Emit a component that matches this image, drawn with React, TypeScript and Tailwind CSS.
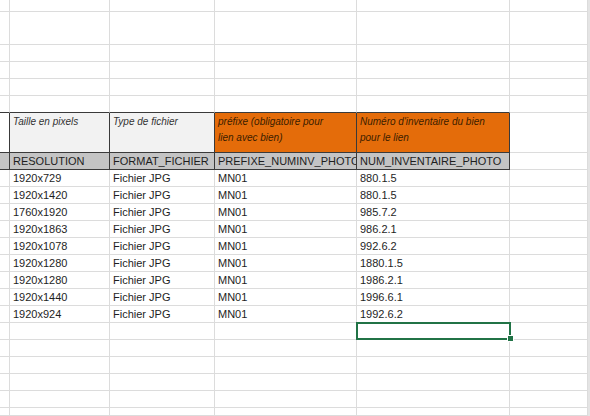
import React from 'react';

const COLS = ['w-[10px]', 'w-[100px]', 'w-[105px]', 'w-[142px]', 'w-[153px]', 'w-[78px]'];
const GRID = 'border-r border-b border-[#dcdcdc]';
const DARK = 'border-r border-b border-[#3a3a3a]';
const TXT = 'flex items-end px-[3px] pb-[1px] leading-[14px] whitespace-nowrap overflow-hidden';

const rows = [
  ['1920x729', '880.1.5'],
  ['1920x1420', '880.1.5'],
  ['1760x1920', '985.7.2'],
  ['1920x1863', '986.2.1'],
  ['1920x1078', '992.6.2'],
  ['1920x1280', '1880.1.5'],
  ['1920x1280', '1986.2.1'],
  ['1920x1440', '1996.6.1'],
  ['1920x924', '1992.6.2'],
];

function Edge() {
  return <div className="w-[2px] shrink-0 bg-[#e4e4e4]" />;
}

function EmptyRow({ h }: { h: string }) {
  return (
    <div className={`flex ${h}`}>
      {COLS.map((w, i) => (
        <div key={i} className={`${w} shrink-0 ${GRID}`} />
      ))}
      <Edge />
    </div>
  );
}

export default function App() {
  return (
    <div className="w-[590px] h-[416px] overflow-hidden bg-white text-[11px] text-[#1e1e1e] font-['Liberation_Sans',Arial,sans-serif]">
      <EmptyRow h="h-[12px]" />
      <EmptyRow h="h-[33px]" />
      <EmptyRow h="h-[17px]" />
      <EmptyRow h="h-[17px]" />
      <EmptyRow h="h-[17px]" />

      {/* row above the table: dark bottom edge */}
      <div className="flex h-[17px]">
        {COLS.slice(0, 5).map((w, i) => (
          <div key={i} className={`${w} shrink-0 border-r border-b border-r-[#dcdcdc] border-b-[#3a3a3a]`} />
        ))}
        <div className={`${COLS[5]} shrink-0 ${GRID}`} />
        <Edge />
      </div>

      {/* Header labels */}
      <div className="flex h-[40px] text-[10px] italic leading-[16px]">
        <div className={`${COLS[0]} shrink-0 ${DARK}`} />
        <div className={`${COLS[1]} shrink-0 ${DARK} bg-[#f2f2f2] text-[#333] px-[3px] pt-px whitespace-nowrap overflow-hidden`}>
          Taille en pixels
        </div>
        <div className={`${COLS[2]} shrink-0 ${DARK} bg-[#f2f2f2] text-[#333] px-[3px] pt-px whitespace-nowrap overflow-hidden`}>
          Type de fichier
        </div>
        <div className={`${COLS[3]} shrink-0 ${DARK} bg-[#e46c0a] text-[#3b1d00] px-[3px] pt-px whitespace-nowrap overflow-hidden`}>
          préfixe (obligatoire pour
          <br />
          lien avec bien)
        </div>
        <div className={`${COLS[4]} shrink-0 ${DARK} bg-[#e46c0a] text-[#3b1d00] px-[3px] pt-px whitespace-nowrap overflow-hidden`}>
          Numéro d'inventaire du bien
          <br />
          pour le lien
        </div>
        <div className={`${COLS[5]} shrink-0 ${GRID}`} />
        <Edge />
      </div>

      {/* Field names */}
      <div className="flex h-[17px]">
        <div className={`${COLS[0]} shrink-0 ${DARK} bg-[#c4c4c4]`} />
        <div className={`${COLS[1]} shrink-0 ${DARK} bg-[#c4c4c4] ${TXT}`}>RESOLUTION</div>
        <div className={`${COLS[2]} shrink-0 ${DARK} bg-[#c4c4c4] ${TXT}`}>FORMAT_FICHIER</div>
        <div className={`${COLS[3]} shrink-0 ${DARK} bg-[#c4c4c4] ${TXT}`}>PREFIXE_NUMINV_PHOTO</div>
        <div className={`${COLS[4]} shrink-0 ${DARK} bg-[#c4c4c4] ${TXT}`}>NUM_INVENTAIRE_PHOTO</div>
        <div className={`${COLS[5]} shrink-0 ${GRID}`} />
        <Edge />
      </div>

      {rows.map(([res, num], i) => (
        <div key={i} className="flex h-[17px]">
          <div className={`${COLS[0]} shrink-0 ${GRID}`} />
          <div className={`${COLS[1]} shrink-0 ${GRID} ${TXT}`}>{res}</div>
          <div className={`${COLS[2]} shrink-0 ${GRID} ${TXT}`}>Fichier JPG</div>
          <div className={`${COLS[3]} shrink-0 ${GRID} ${TXT}`}>MN01</div>
          <div className={`${COLS[4]} shrink-0 ${GRID} ${TXT}`}>{num}</div>
          <div className={`${COLS[5]} shrink-0 ${GRID}`} />
          <Edge />
        </div>
      ))}

      {/* Row with the active cell */}
      <div className="flex h-[17px]">
        {COLS.slice(0, 4).map((w, i) => (
          <div key={i} className={`${w} shrink-0 ${GRID}`} />
        ))}
        <div className={`${COLS[4]} shrink-0 ${GRID} relative`}>
          <div className="absolute -left-px -top-px w-[155px] h-[18px] border-2 border-[#217346]" />
          <div className="absolute left-[150px] top-[12px] w-[7px] h-[7px] bg-[#217346] border border-white" />
        </div>
        <div className={`${COLS[5]} shrink-0 ${GRID}`} />
        <Edge />
      </div>

      <EmptyRow h="h-[17px]" />
      <EmptyRow h="h-[17px]" />
      <EmptyRow h="h-[17px]" />
      <EmptyRow h="h-[17px]" />
      <EmptyRow h="h-[8px]" />
    </div>
  );
}
